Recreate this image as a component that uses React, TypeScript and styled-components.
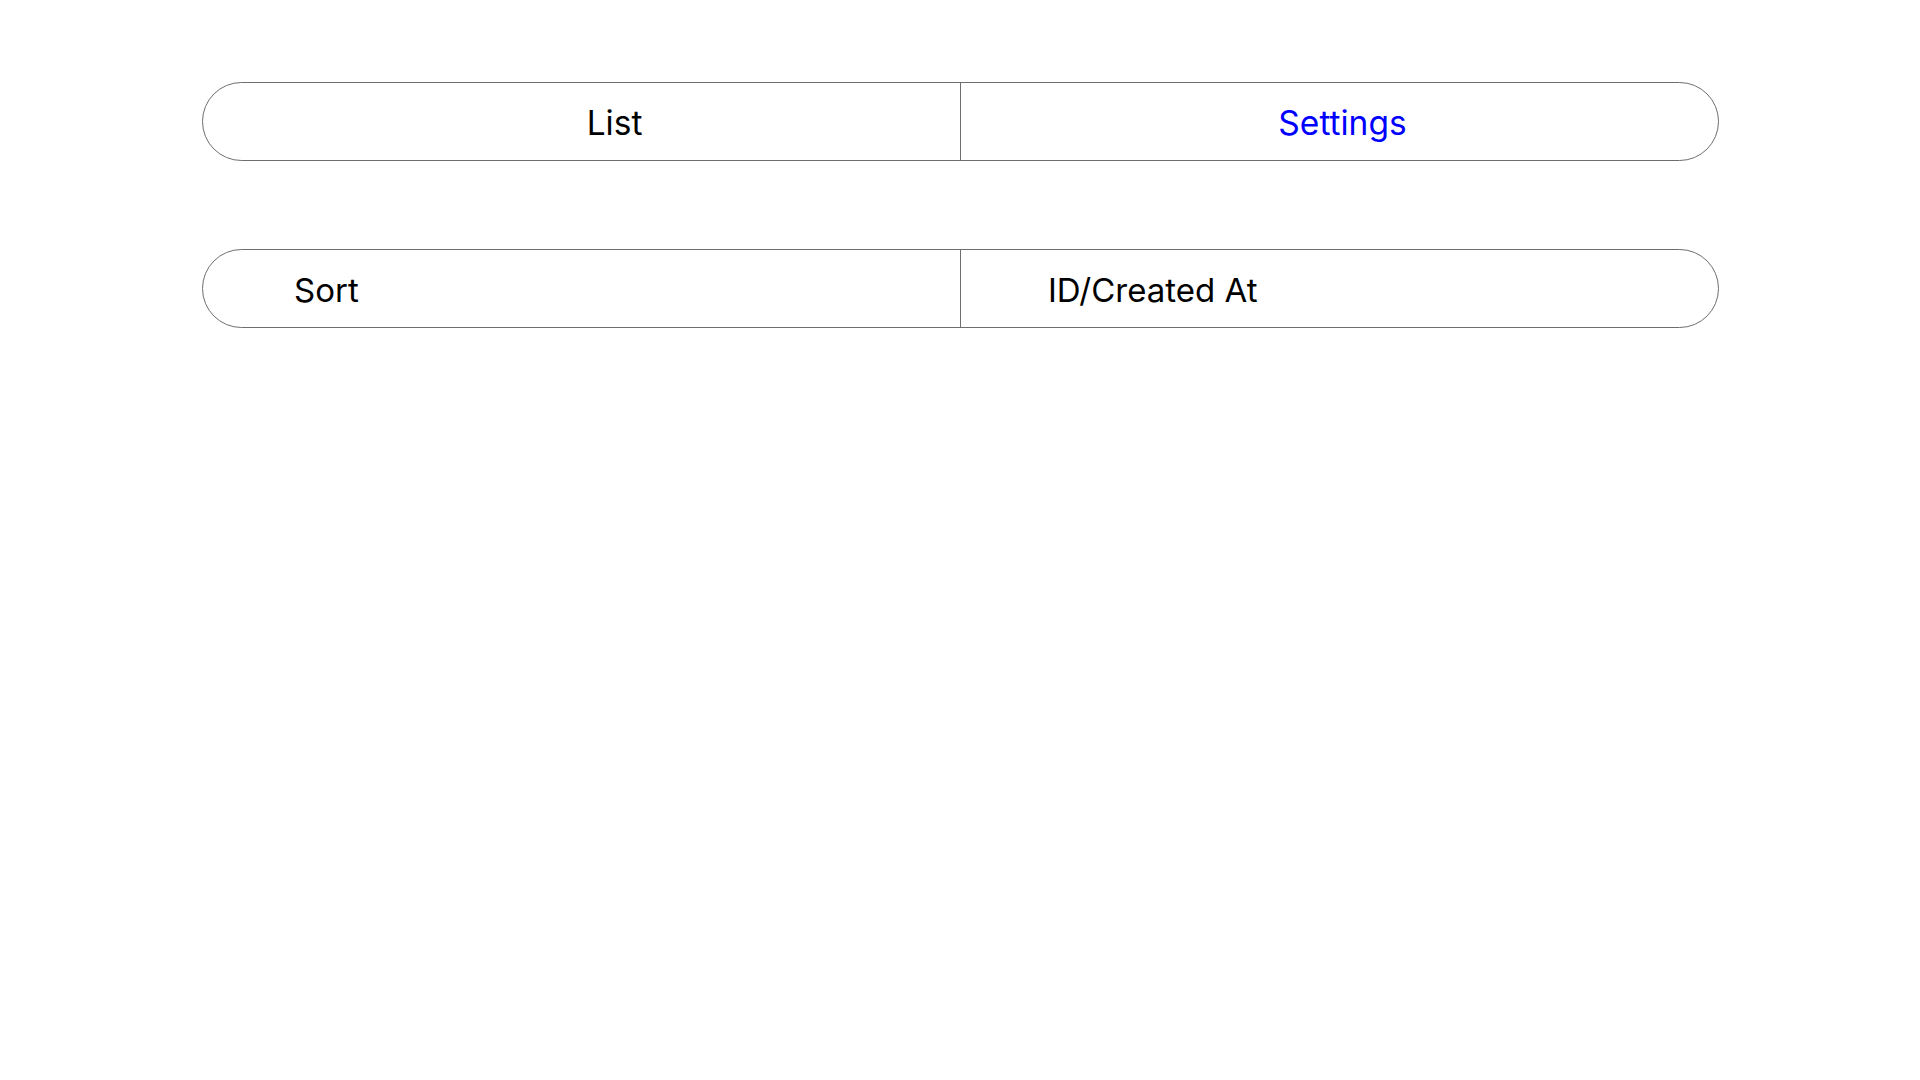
import styled, { createGlobalStyle } from "styled-components";

import type React from "react";

/* -----------------------------------------------
 * Settings ページ
 * ----------------------------------------------- */

const GlobalStyle = createGlobalStyle`
  html, body {
    margin: 0;
    padding: 0;
    background: #fff;
  }
  body {
    font-family: Inter, Roboto, "Liberation Sans", sans-serif;
  }
`;

const App: React.FC = () => {
  return (
    <>
      <GlobalStyle />
      <Page>
        {/* タブ */}
        <Bar>
          <Tab $shift={66}>List</Tab>
          <Tab $shift={6} $active>
            Settings
          </Tab>
        </Bar>

        {/* 並び順 */}
        <Bar>
          <Cell $inset={91}>Sort</Cell>
          <Cell $inset={87}>ID/Created At</Cell>
        </Bar>
      </Page>
    </>
  );
};

const Page = styled.div`
  display: flex;
  flex-direction: column;
  gap: 88px;
  padding: 82px 0 0 202px;
  width: 1517px;
`;

const Bar = styled.div`
  display: grid;
  grid-template-columns: 757px 1fr;
  height: 77px;
  border: 1px solid #6e6e6e;
  border-radius: 40px;
  overflow: hidden;
  > * + * {
    border-left: 1px solid #6e6e6e;
  }
`;

const Tab = styled.div<{ $shift: number; $active?: boolean }>`
  display: flex;
  align-items: center;
  justify-content: center;
  padding: 2px 0 0 ${(p) => p.$shift}px;
  font-size: 33.5px;
  color: ${(p) => (p.$active ? "#0000ff" : "#000")};
`;

const Cell = styled.div<{ $inset: number }>`
  display: flex;
  align-items: center;
  padding: 2px 0 0 ${(p) => p.$inset}px;
  font-size: 33px;
  color: #000;
`;

export default App;
